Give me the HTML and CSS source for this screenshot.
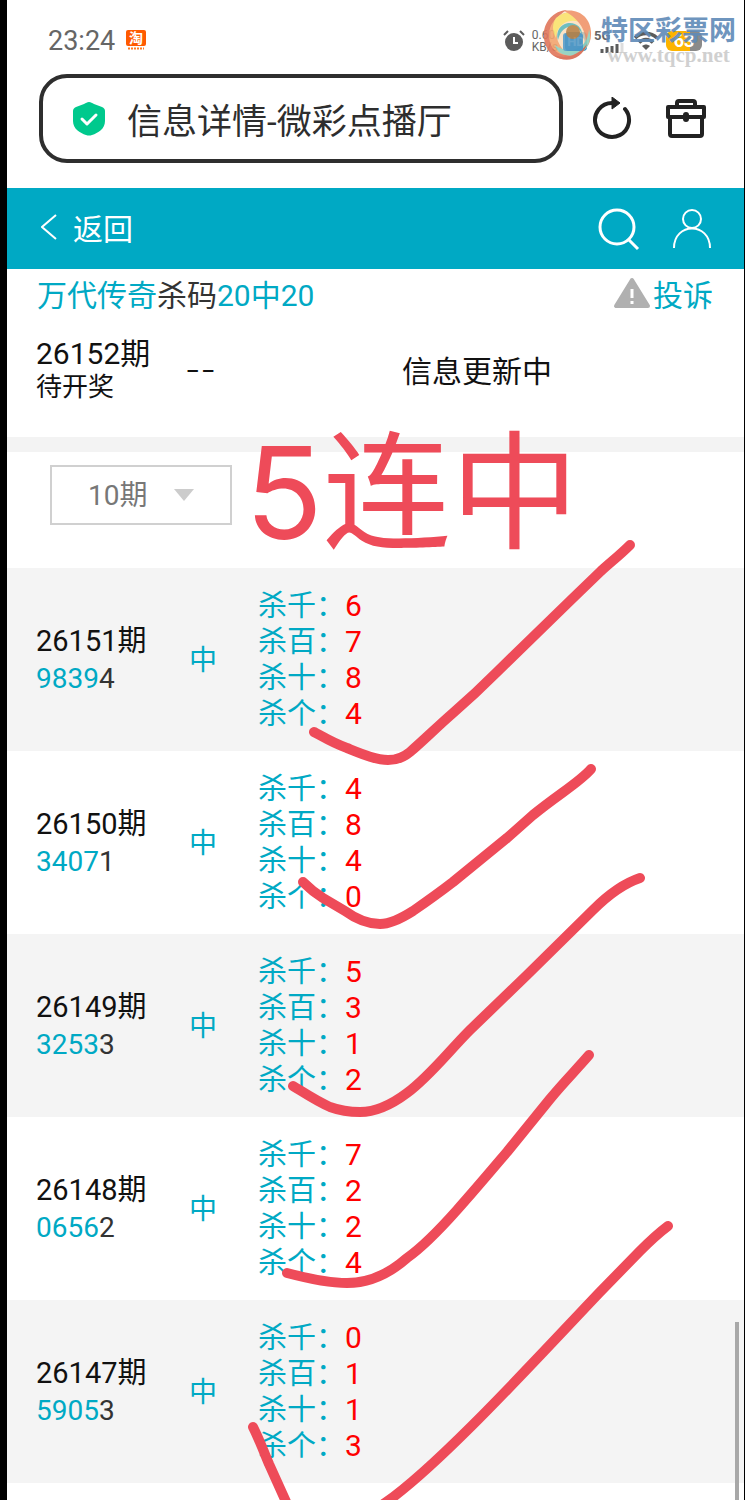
FILE: index.html
```html
<!DOCTYPE html>
<html lang="zh-CN">
<head>
    <meta charset="UTF-8">
    <meta name="viewport" content="width=device-width, initial-scale=1.0">
    <title>信息详情-微彩点播厅</title>
    <link rel="stylesheet" href="styles.css">
</head>
<body>
    <div class="screen">
        <!-- Status bar -->
        <div class="status-bar">
            <span class="time">23:24</span>
            <svg class="taobao" width="22" height="22" viewBox="0 0 22 22">
                <rect x="1" y="0" width="20" height="16" rx="2" fill="#ff5a00"/>
                <text x="11" y="13" text-anchor="middle" class="taobao-text">淘</text>
                <path d="M3 18.5h16" stroke="#ff7a20" stroke-width="2" stroke-dasharray="2 1"/>
            </svg>
            <div class="status-icons">
                <svg width="22" height="22" viewBox="0 0 22 22">
                    <circle cx="11" cy="12" r="9" fill="#5c5c5c"/>
                    <path d="M1 5l4-4M21 5l-4-4" stroke="#5c5c5c" stroke-width="2"/>
                    <path d="M11 7v6h4" fill="none" stroke="#fff" stroke-width="2"/>
                </svg>
                <span class="speed">0.60<br>KB/s</span>
                <span class="hd">HD</span>
                <div class="signal">
                    <span>5G</span>
                    <svg width="24" height="10" viewBox="0 0 24 10">
                        <path d="M2 10V6M7 10V4M12 10V3M17 10V1" stroke="#5c5c5c" stroke-width="3"/>
                        <path d="M22 10V0" stroke="#ddd" stroke-width="3"/>
                    </svg>
                </div>
                <svg width="26" height="20" viewBox="0 0 26 20">
                    <path d="M2 7c6-6 16-6 22 0M6 11.500c4-4 10-4 14 0" fill="none" stroke="#5c5c5c" stroke-width="3.500"/>
                    <path d="M9 15c3-2 5-2 8 0l-4 4z" fill="#5c5c5c"/>
                </svg>
                <span class="battery">63</span>
            </div>
        </div>

        <!-- Browser address bar -->
        <div class="browser-bar">
            <label class="address">
                <svg width="32" height="34" viewBox="0 0 32 34">
                    <path d="M16 0c2 0 3 1 5 2l8 3c2 1 3 2 3 4v10c0 8-7 12-13 14q-3 1-6 0C7 31 0 27 0 19V9c0-2 1-3 3-4l8-3c2-1 3-2 5-2z" fill="#00c98d"/>
                    <path d="M9 17l5 5 9-9" fill="none" stroke="#fff" stroke-width="3" stroke-linecap="round" stroke-linejoin="round"/>
                </svg>
                <input type="text" aria-label="地址" value="信息详情-微彩点播厅">
            </label>
            <button class="icon-btn refresh" aria-label="刷新">
                <svg width="40" height="44" viewBox="0 0 40 44">
                    <path d="M33 12A17 17 0 1 1 20 6" fill="none" stroke="#222" stroke-width="4" stroke-linecap="round"/>
                    <path d="M20 0l8 6-8 6z" fill="#222" stroke="#222" stroke-linejoin="round"/>
                </svg>
            </button>
            <button class="icon-btn" aria-label="工具箱">
                <svg width="40" height="40" viewBox="0 0 40 40" fill="none" stroke="#222" stroke-width="4" stroke-linejoin="round">
                    <path d="M11 8V4q0-2 2-2h14q2 0 2 2v4M2 8h36v10H2zM4 18v17q0 2 2 2h28q2 0 2-2V18"/>
                    <path d="M20 16v4" stroke-width="6" stroke-linecap="round"/>
                </svg>
            </button>
        </div>

        <!-- Site header -->
        <div class="header">
            <a href="#" class="back">
                <svg width="16" height="26" viewBox="0 0 16 26">
                    <path d="M15 1L1 13l14 12" fill="none" stroke="#fff" stroke-width="2"/>
                </svg>
                返回
            </a>
            <a href="#" aria-label="搜索">
                <svg width="42" height="44" viewBox="0 0 42 44" fill="none" stroke="#fff">
                    <circle cx="19" cy="20" r="17" stroke-width="3"/>
                    <path d="M31 33l9 9" stroke-width="3"/>
                </svg>
            </a>
            <a href="#" aria-label="我的" class="user">
                <svg width="40" height="40" viewBox="0 0 40 40" fill="none" stroke="#fff" stroke-width="2">
                    <circle cx="20" cy="10" r="9"/>
                    <path d="M2 39c0-26 36-26 36 0"/>
                </svg>
            </a>
        </div>

        <div class="title-row">
            <h1>万代传奇<span>杀码</span>20中20</h1>
            <a href="#" class="report">
                <svg width="38" height="32" viewBox="0 0 38 32">
                    <path d="M19 3L3 29h32z" fill="#b0b0b0" stroke="#b0b0b0" stroke-width="4" stroke-linejoin="round"/>
                    <path d="M19 12v9M19 24v3" stroke="#fff" stroke-width="3"/>
                </svg>
                投诉
            </a>
        </div>

        <!-- Current period -->
        <div class="current">
            <div class="period">26152期<small>待开奖</small></div>
            <div class="result">--</div>
            <div class="message">信息更新中</div>
        </div>

        <div class="filter">
            <div class="select-box">
                <select aria-label="期数">
                    <option>10期</option>
                </select>
            </div>
        </div>

        <!-- History -->
        <table class="history">
            <tbody>
                <tr>
                    <td class="issue">26151期<div class="code">9839<span>4</span></div></td>
                    <td class="hit">中</td>
                    <td class="kill">
                        <div>杀千：<b>6</b></div>
                        <div>杀百：<b>7</b></div>
                        <div>杀十：<b>8</b></div>
                        <div>杀个：<b>4</b></div>
                    </td>
                </tr>
                <tr>
                    <td class="issue">26150期<div class="code">3407<span>1</span></div></td>
                    <td class="hit">中</td>
                    <td class="kill">
                        <div>杀千：<b>4</b></div>
                        <div>杀百：<b>8</b></div>
                        <div>杀十：<b>4</b></div>
                        <div>杀个：<b>0</b></div>
                    </td>
                </tr>
                <tr>
                    <td class="issue">26149期<div class="code">3253<span>3</span></div></td>
                    <td class="hit">中</td>
                    <td class="kill">
                        <div>杀千：<b>5</b></div>
                        <div>杀百：<b>3</b></div>
                        <div>杀十：<b>1</b></div>
                        <div>杀个：<b>2</b></div>
                    </td>
                </tr>
                <tr>
                    <td class="issue">26148期<div class="code">0656<span>2</span></div></td>
                    <td class="hit">中</td>
                    <td class="kill">
                        <div>杀千：<b>7</b></div>
                        <div>杀百：<b>2</b></div>
                        <div>杀十：<b>2</b></div>
                        <div>杀个：<b>4</b></div>
                    </td>
                </tr>
                <tr>
                    <td class="issue">26147期<div class="code">5905<span>3</span></div></td>
                    <td class="hit">中</td>
                    <td class="kill">
                        <div>杀千：<b>0</b></div>
                        <div>杀百：<b>1</b></div>
                        <div>杀十：<b>1</b></div>
                        <div>杀个：<b>3</b></div>
                    </td>
                </tr>
            </tbody>
        </table>

        <div class="scrollbar"></div>

        <!-- Site watermark -->
        <div class="watermark">
            <svg width="50" height="52" viewBox="0 0 50 52" fill="none">
                <circle cx="25" cy="26" r="23" fill="#fbd9b0" opacity="0.800"/>
                <path d="M6 41C-5 22 7 2 25 1 12 8 7 20 12 32c4 9 11 14 21 15C23 53 12 50 6 41z" fill="#e0765a"/>
                <path d="M9 36C3 20 12 4 30 3 18 9 13 18 15 29c2 8 7 14 14 17-9 1-16-2-20-10z" fill="#f3a56e"/>
                <path d="M14 9C28-3 46 6 49 24 43 13 31 8 21 15c-5 4-7 9-7 14-4-7-4-14 0-20z" fill="#fae26c"/>
                <path d="M22 2c16-3 28 8 27 24 0 5-2 10-5 13 1-14-4-28-22-37z" fill="#f0946a"/>
                <path d="M47 20c5 17-9 30-23 26-6-1-10-5-11-10 11 9 32 8 34-16z" fill="#8fd0bd"/>
                <path d="M45 35c-5 16-22 20-34 11 13 4 25 1 34-11z" fill="#d9694f"/>
                <path d="M16 31c-3-10 4-17 12-17 7 0 12 5 12 11-3-6-8-8-13-7-6 1-9 6-11 13z" fill="#5fb8ba"/>
                <rect x="21" y="24" width="20" height="18" rx="3" fill="#4694c6" opacity="0.900"/>
                <circle cx="31" cy="23" r="7" fill="#b98247"/>
            </svg>
            <div class="watermark-text">特区彩票网<span>www.tqcp.net</span></div>
        </div>

        <!-- Hand-drawn marks -->
        <div class="big-note">5连中</div>
        <svg class="marks" width="745" height="1500" viewBox="7 0 745 1500">
            <path d="M314 732C325 738 335 744 347 748C362 754 376 760 388 760C397 760 404 757 410 752C424 740 438 726 453 713C468 700 483 686 497 672L573 598L601 571C612 561 620 555 630 545"/>
            <path d="M303 882C309 888 315 893 323 898L345 911C356 919 367 924 380 924C391 924 402 918 413 911C426 902 440 892 453 882L507 838L533 815C560 793 580 782 591 769"/>
            <path d="M293 1086C306 1094 318 1102 330 1107C341 1111 350 1112 360 1112C375 1112 391 1105 407 1093C429 1077 449 1051 470 1030L527 975L593 910C610 893 625 883 640 878"/>
            <path d="M287 1273C306 1278 326 1283 347 1283C369 1283 390 1273 407 1258C424 1246 441 1228 457 1210C474 1191 490 1172 507 1152L550 1099C563 1083 577 1069 589 1055"/>
            <path d="M253 1427C259 1439 264 1452 269 1464L292 1515C315 1550 360 1520 385 1503C440 1465 540 1355 600 1292L640 1251C651 1240 660 1232 668 1226"/>
        </svg>
    </div>
</body>
</html>
```
FILE: styles.css
```css
* {
    box-sizing: border-box;
}
body {
    margin: 0;
    background: #000;
    font-family: Roboto, "Noto Sans CJK SC", sans-serif;
    font-size: 30px;
    color: #111;
}
a {
    color: inherit;
    text-decoration: none;
}
svg {
    display: block;
    flex: none;
}
.screen {
    position: relative;
    min-height: 100vh;
    margin: 0 1px 0 7px;
    background: #fff;
    overflow: hidden;
}

/* status bar */
.status-bar {
    display: flex;
    align-items: center;
    height: 74px;
    padding: 8px 42px 0 41px;
}
.time {
    font-size: 27px;
    color: #666;
}
.taobao {
    margin-left: 10px;
}
.taobao-text {
    font-size: 14px;
    font-weight: bold;
    fill: #fff;
}
.status-icons {
    display: flex;
    align-items: center;
    gap: 7px;
    margin-left: auto;
    color: #666;
}
.speed {
    font-size: 12px;
    line-height: 12px;
}
.hd {
    width: 22px;
    border-radius: 4px;
    background: #2f8fc8;
    color: #fff;
    font-size: 13px;
    font-weight: bold;
    line-height: 19px;
    text-align: center;
}
.signal {
    width: 32px;
    font-size: 13px;
    font-weight: bold;
    line-height: 14px;
}
.signal span {
    display: block;
}
.signal svg {
    margin-left: 6px;
}
.battery {
    width: 36px;
    border-radius: 6px;
    background: linear-gradient(to right, #fdb400 24px, #8a8a8a 24px);
    color: #fff;
    font-size: 18px;
    font-weight: bold;
    line-height: 20px;
    text-align: center;
}

/* browser bar */
.browser-bar {
    display: flex;
    align-items: center;
    padding: 0 38px 25px 32px;
}
.address {
    display: flex;
    flex: 1;
    align-items: center;
    gap: 22px;
    min-width: 0;
    height: 89px;
    padding: 0 30px;
    border: 4px solid #2e2e2e;
    border-radius: 28px;
}
.address input {
    flex: 1;
    min-width: 0;
    padding: 0;
    border: none;
    outline: none;
    background: none;
    font: inherit;
    font-size: 35px;
    color: #2e2e2e;
}
.icon-btn {
    margin-left: 34px;
    padding: 0;
    border: none;
    background: none;
    cursor: pointer;
}
.refresh {
    margin-left: 29px;
}

/* site header */
.header {
    display: flex;
    align-items: center;
    height: 81px;
    padding: 0 32px 0 34px;
    background: #00a9c4;
    color: #fff;
}
.back {
    display: flex;
    align-items: center;
    gap: 16px;
    margin-right: auto;
    padding-bottom: 4px;
}
.user {
    margin-left: 32px;
}

.title-row {
    display: flex;
    align-items: center;
    justify-content: space-between;
    height: 52px;
    padding: 0 31px 4px 30px;
    color: #00a9c4;
}
.title-row h1 {
    margin: 0;
    font-size: 30px;
    font-weight: normal;
}
.title-row h1 span {
    color: #333;
}
.report {
    display: flex;
    align-items: center;
    gap: 2px;
}

/* current period */
.current {
    display: flex;
    align-items: center;
    height: 131px;
    padding: 0 29px 20px;
    border-bottom: 15px solid #f3f3f3;
}
.period {
    width: 149px;
    line-height: 36px;
}
.period small {
    display: block;
    font-size: 26px;
    line-height: 30px;
}
.result {
    width: 180px;
    font-family: Inter, sans-serif;
    font-size: 34px;
    font-weight: 300;
}
.message {
    width: 224px;
    text-align: center;
}

.filter {
    height: 116px;
    padding: 13px 43px;
}
.select-box {
    position: relative;
    width: 182px;
}
.select-box::after {
    content: "";
    position: absolute;
    top: 24px;
    right: 38px;
    border: 10px solid transparent;
    border-top: 12px solid #ccc;
    border-bottom: none;
    pointer-events: none;
}
.select-box select {
    width: 100%;
    height: 60px;
    padding: 0 0 0 36px;
    border: 2px solid #d0d0d0;
    border-radius: 0;
    background: #fff;
    color: #777;
    font: inherit;
    font-size: 28px;
    appearance: none;
}

/* history */
.history {
    width: 100%;
    border-collapse: collapse;
    table-layout: fixed;
}
.history tr {
    height: 183px;
}
.history tr:nth-child(odd) {
    background: #f4f4f4;
}
.history td {
    padding: 0;
    font-size: 29px;
}
.history .issue {
    width: 182px;
    padding-left: 29px;
    line-height: 38px;
}
.issue .code {
    font-size: 28px;
    color: #00a9c4;
}
.issue .code span {
    color: #333;
}
.history .hit {
    width: 69px;
    padding-bottom: 4px;
    color: #00a9c4;
    font-size: 28px;
}
.kill div {
    line-height: 35px;
    color: #00a9c4;
}
.kill b {
    font-size: 30px;
    font-weight: normal;
    color: #f00;
}

/* overlays */
.scrollbar {
    position: absolute;
    right: 5px;
    bottom: 0;
    width: 4px;
    height: 178px;
    background: #a8a8a8;
}
.watermark {
    position: absolute;
    top: 9px;
    right: 8px;
    display: flex;
    gap: 9px;
    opacity: 0.9;
}
.watermark-text {
    padding-top: 8px;
    color: #5f8ab8;
    font-size: 27px;
    font-weight: bold;
    line-height: 28px;
}
.watermark-text span {
    display: block;
    color: #ccc;
    font-family: "Liberation Serif", serif;
    font-size: 21px;
    line-height: 20px;
    text-align: center;
}
.big-note {
    position: absolute;
    top: 413px;
    left: 238px;
    color: #ee4b59;
    font-family: Inter, "Noto Sans CJK SC", sans-serif;
    font-size: 128px;
    line-height: 160px;
    white-space: nowrap;
}
.marks {
    position: absolute;
    top: 0;
    left: 0;
    fill: none;
    stroke: #ee4b59;
    stroke-width: 10;
    stroke-linecap: round;
    stroke-linejoin: round;
    pointer-events: none;
}
```
